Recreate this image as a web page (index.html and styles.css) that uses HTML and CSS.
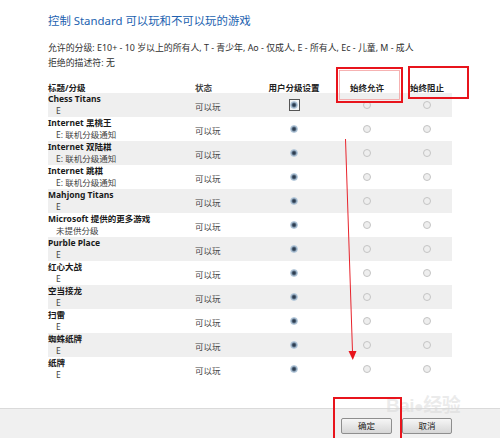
FILE: index.html
```html
<!DOCTYPE html>
<html lang="zh-CN">
<head>
<meta charset="utf-8">
<title>游戏控制</title>
<link rel="stylesheet" href="styles.css">
</head>
<body>
<div class="page">
  <main class="content">
    <h1 class="title">控制 Standard 可以玩和不可以玩的游戏</h1>
    <div class="info">
      <p>允许的分级: E10+ - 10 岁以上的所有人, T - 青少年, Ao - 仅成人, E - 所有人, Ec - 儿童, M - 成人</p>
      <p>拒绝的描述符: 无</p>
    </div>
    <div class="table">
      <div class="row head">
        <div class="c-name">标题/分级</div>
        <div class="c-status">状态</div>
        <div class="c-radio">用户分级设置</div>
        <div class="c-radio">始终允许</div>
        <div class="c-radio">始终阻止</div>
      </div>
      <div class="row alt">
        <div class="c-name"><div class="gname">Chess Titans</div><div class="gsub">E</div></div>
        <div class="c-status">可以玩</div>
        <div class="c-radio"><span class="focus"><span class="radio on"></span></span></div>
        <div class="c-radio"><span class="radio"></span></div>
        <div class="c-radio"><span class="radio"></span></div>
      </div>
      <div class="row">
        <div class="c-name"><div class="gname">Internet 黑桃王</div><div class="gsub">E: 联机分级通知</div></div>
        <div class="c-status">可以玩</div>
        <div class="c-radio"><span class="radio on"></span></div>
        <div class="c-radio"><span class="radio"></span></div>
        <div class="c-radio"><span class="radio"></span></div>
      </div>
      <div class="row alt">
        <div class="c-name"><div class="gname">Internet 双陆棋</div><div class="gsub">E: 联机分级通知</div></div>
        <div class="c-status">可以玩</div>
        <div class="c-radio"><span class="radio on"></span></div>
        <div class="c-radio"><span class="radio"></span></div>
        <div class="c-radio"><span class="radio"></span></div>
      </div>
      <div class="row">
        <div class="c-name"><div class="gname">Internet 跳棋</div><div class="gsub">E: 联机分级通知</div></div>
        <div class="c-status">可以玩</div>
        <div class="c-radio"><span class="radio on"></span></div>
        <div class="c-radio"><span class="radio"></span></div>
        <div class="c-radio"><span class="radio"></span></div>
      </div>
      <div class="row alt">
        <div class="c-name"><div class="gname">Mahjong Titans</div><div class="gsub">E</div></div>
        <div class="c-status">可以玩</div>
        <div class="c-radio"><span class="radio on"></span></div>
        <div class="c-radio"><span class="radio"></span></div>
        <div class="c-radio"><span class="radio"></span></div>
      </div>
      <div class="row">
        <div class="c-name"><div class="gname">Microsoft 提供的更多游戏</div><div class="gsub">未提供分级</div></div>
        <div class="c-status">可以玩</div>
        <div class="c-radio"><span class="radio on"></span></div>
        <div class="c-radio"><span class="radio"></span></div>
        <div class="c-radio"><span class="radio"></span></div>
      </div>
      <div class="row alt">
        <div class="c-name"><div class="gname">Purble Place</div><div class="gsub">E</div></div>
        <div class="c-status">可以玩</div>
        <div class="c-radio"><span class="radio on"></span></div>
        <div class="c-radio"><span class="radio"></span></div>
        <div class="c-radio"><span class="radio"></span></div>
      </div>
      <div class="row">
        <div class="c-name"><div class="gname">红心大战</div><div class="gsub">E</div></div>
        <div class="c-status">可以玩</div>
        <div class="c-radio"><span class="radio on"></span></div>
        <div class="c-radio"><span class="radio"></span></div>
        <div class="c-radio"><span class="radio"></span></div>
      </div>
      <div class="row alt">
        <div class="c-name"><div class="gname">空当接龙</div><div class="gsub">E</div></div>
        <div class="c-status">可以玩</div>
        <div class="c-radio"><span class="radio on"></span></div>
        <div class="c-radio"><span class="radio"></span></div>
        <div class="c-radio"><span class="radio"></span></div>
      </div>
      <div class="row">
        <div class="c-name"><div class="gname">扫雷</div><div class="gsub">E</div></div>
        <div class="c-status">可以玩</div>
        <div class="c-radio"><span class="radio on"></span></div>
        <div class="c-radio"><span class="radio"></span></div>
        <div class="c-radio"><span class="radio"></span></div>
      </div>
      <div class="row alt">
        <div class="c-name"><div class="gname">蜘蛛纸牌</div><div class="gsub">E</div></div>
        <div class="c-status">可以玩</div>
        <div class="c-radio"><span class="radio on"></span></div>
        <div class="c-radio"><span class="radio"></span></div>
        <div class="c-radio"><span class="radio"></span></div>
      </div>
      <div class="row">
        <div class="c-name"><div class="gname">纸牌</div><div class="gsub">E</div></div>
        <div class="c-status">可以玩</div>
        <div class="c-radio"><span class="radio on"></span></div>
        <div class="c-radio"><span class="radio"></span></div>
        <div class="c-radio"><span class="radio"></span></div>
      </div>
    </div>
  </main>
  <footer class="footer">
    <button class="btn">确定</button>
    <button class="btn">取消</button>
  </footer>
  <div class="watermark">Bai<span class="paw">&#9679;</span>经验</div>
  <svg class="annot" width="500" height="438" viewBox="0 0 500 438">
    <rect x="337" y="68" width="65" height="34" fill="none" stroke="#e8141c" stroke-width="2"/>
    <rect x="339.5" y="70.5" width="60" height="29" fill="none" stroke="#f4a0a0" stroke-width="0.8"/>
    <rect x="409" y="67" width="59" height="31" fill="none" stroke="#e8141c" stroke-width="2"/>
    <rect x="334" y="398" width="67" height="42" fill="none" stroke="#e8141c" stroke-width="2"/>
    <line x1="345.5" y1="139" x2="352.5" y2="352" stroke="#e8242c" stroke-width="1"/>
    <polygon points="348.5,351 356.5,351 352.8,360" fill="#e8141c"/>
  </svg>
</div>
</body>
</html>
```

FILE: styles.css
```css
* { box-sizing: border-box; }
html, body { margin: 0; padding: 0; }
body {
  width: 500px;
  height: 438px;
  background: #ffffff;
  font-family: "Noto Sans", "Noto Sans CJK SC", sans-serif;
  font-size: 8.5px;
  color: #2a2a2a;
  overflow: hidden;
}
.page {
  position: relative;
  width: 500px;
  height: 438px;
  display: flex;
  flex-direction: column;
}
.content {
  flex: 1;
  padding: 13px 0 0 48px;
}
.title {
  margin: 0;
  height: 15px;
  line-height: 15px;
  font-size: 11.4px;
  font-weight: normal;
  color: #2262b0;
  white-space: nowrap;
}
.info {
  margin-top: 12px;
}
.info p {
  margin: 0;
  line-height: 15px;
  font-size: 8.9px;
  white-space: nowrap;
  color: #303030;
}
.table {
  margin-top: 11px;
  width: 404px;
}
.row {
  display: grid;
  grid-template-columns: 147px 61px 76px 70px 50px;
  align-items: center;
  height: 24px;
}
.row.alt { background: #efefef; }
.row.head {
  height: 12px;
  font-weight: bold;
  color: #222;
  line-height: 12px;
}
.c-name { line-height: 12px; white-space: nowrap; }
.c-status { color: #444; padding-top: 1px; }
.c-radio {
  display: flex;
  justify-content: center;
  align-items: center;
  white-space: nowrap;
}
.gname { font-weight: bold; color: #1a1a1a; }
.gsub { padding-left: 8px; color: #444; }

.radio {
  display: block;
  width: 8px;
  height: 8px;
  border-radius: 50%;
  border: 1.5px solid #c4c4c4;
  background: #eeeeee;
}
.radio.on {
  border: 1px solid #b4c8da;
  background: radial-gradient(circle at 50% 50%, #243244 0, #34465a 30%, #8da3b9 62%, #d2e0ec 100%);
}
.focus {
  display: flex;
  align-items: center;
  justify-content: center;
  width: 11px;
  height: 12px;
  border: 1px solid #555;
  background: #f6f6f6;
}

.footer {
  height: 30px;
  border-top: 1px solid #dadada;
  background: #f0f0f0;
  display: flex;
  justify-content: flex-end;
  align-items: flex-start;
  gap: 10px;
  padding: 9px 48px 0 0;
}
.btn {
  width: 50px;
  height: 16px;
  padding: 0;
  font-family: "Noto Sans", "Noto Sans CJK SC", sans-serif;
  font-size: 8.5px;
  line-height: 14px;
  color: #1a1a1a;
  border: 1px solid #8e8e8e;
  border-radius: 2px;
  background: linear-gradient(#f6f6f6, #e6e6e6 50%, #d6d6d6);
}
.btn:first-child { width: 51px; }

.watermark {
  position: absolute;
  left: 386px;
  top: 390px;
  font-family: "Liberation Sans", "Noto Sans CJK SC", sans-serif;
  font-size: 19px;
  font-weight: bold;
  color: rgba(215, 215, 215, 0.5);
  letter-spacing: -0.5px;
  white-space: nowrap;
  pointer-events: none;
}
.watermark .paw { font-size: 16px; }
.annot {
  position: absolute;
  left: 0;
  top: 0;
  pointer-events: none;
}
```
